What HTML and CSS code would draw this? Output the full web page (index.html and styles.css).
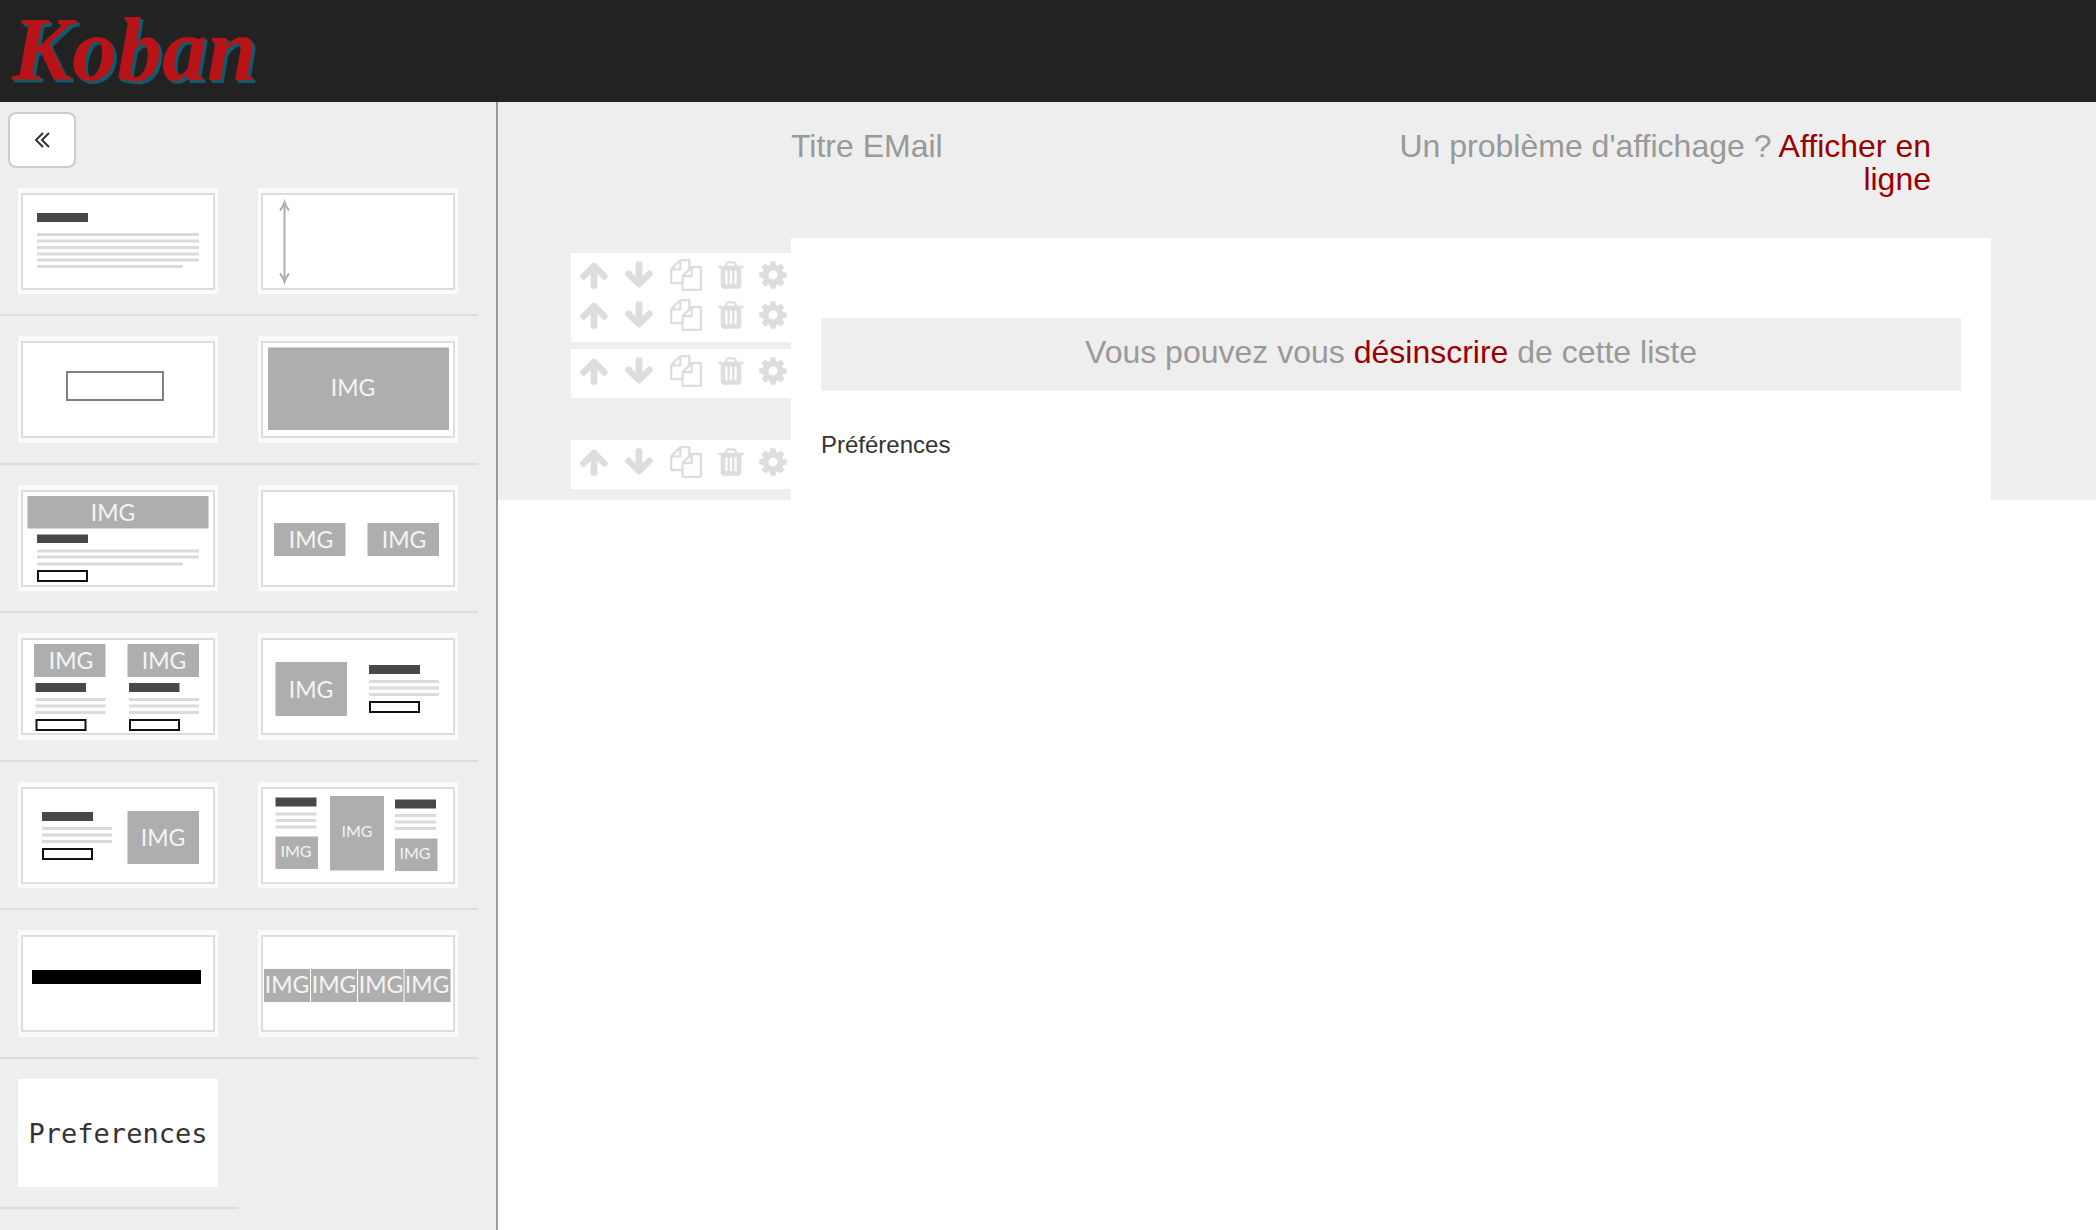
FILE: index.html
```html
<!DOCTYPE html>
<html lang="fr">
<head>
<meta charset="utf-8">
<title>Koban</title>
<meta name="viewport" content="width=device-width, initial-scale=1">
<link rel="stylesheet" href="styles.css">
</head>
<body>
<svg class="defs" width="0" height="0" aria-hidden="true">
  <symbol id="up" viewBox="0 0 1792 1792"><path d="M1675 971q0 51-37 90l-75 75q-38 38-91 38-54 0-90-38l-294-293v704q0 52-37.5 84.5t-90.5 32.5h-128q-53 0-90.5-32.5t-37.5-84.5v-704l-294 293q-36 38-90 38t-90-38l-75-75q-38-38-38-90 0-53 38-91l651-651q35-37 90-37 54 0 91 37l651 651q37 39 37 91z"/></symbol>
  <symbol id="down" viewBox="0 0 1792 1792"><path d="M1675 832q0 53-37 90l-651 652q-39 37-91 37-53 0-90-37l-651-652q-38-36-38-90 0-53 38-91l74-75q39-37 91-37 53 0 90 37l294 294v-704q0-52 38-90t90-38h128q52 0 90 38t38 90v704l294-294q37-37 90-37 52 0 91 37l75 75q37 39 37 91z"/></symbol>
  <symbol id="copy" viewBox="0 0 1792 1792"><path d="M1696 384q40 0 68 28t28 68v1216q0 40-28 68t-68 28h-960q-40 0-68-28t-28-68v-288h-544q-40 0-68-28t-28-68v-672q0-40 20-88t48-76l408-408q28-28 76-48t88-20h416q40 0 68 28t28 68v328q68-40 128-40h416zm-544 213l-299 299h299v-299zm-640-384l-299 299h299v-299zm196 647l316-316v-416h-384v416q0 40-28 68t-68 28h-416v640h512v-256q0-40 20-88t48-76zm956 804v-1152h-384v416q0 40-28 68t-68 28h-416v640h896z"/></symbol>
  <symbol id="trash" viewBox="0 0 1792 1792"><path d="M704 1376v-704q0-14-9-23t-23-9h-64q-14 0-23 9t-9 23v704q0 14 9 23t23 9h64q14 0 23-9t9-23zm256 0v-704q0-14-9-23t-23-9h-64q-14 0-23 9t-9 23v704q0 14 9 23t23 9h64q14 0 23-9t9-23zm256 0v-704q0-14-9-23t-23-9h-64q-14 0-23 9t-9 23v704q0 14 9 23t23 9h64q14 0 23-9t9-23zm-544-992h448l-48-117q-7-9-17-11h-317q-10 2-17 11zm928 32v64q0 14-9 23t-23 9h-96v948q0 83-47 143.5t-113 60.5h-832q-66 0-113-58.5t-47-141.5v-952h-96q-14 0-23-9t-9-23v-64q0-14 9-23t23-9h309l70-167q15-37 54-63t79-26h320q40 0 79 26t54 63l70 167h309q14 0 23 9t9 23z"/></symbol>
  <symbol id="cog" viewBox="0 0 1792 1792"><path d="M1152 896q0-106-75-181t-181-75-181 75-75 181 75 181 181 75 181-75 75-181zm512-109v222q0 12-8 23t-20 13l-185 28q-19 54-39 91 35 50 107 138 10 12 10 25t-9 23q-27 37-99 108t-94 71q-12 0-26-9l-138-108q-44 23-91 38-16 136-29 186-7 28-36 28h-222q-14 0-24.5-8.5t-11.5-21.5l-28-184q-49-16-90-37l-141 107q-10 9-25 9-14 0-25-11-126-114-165-168-7-10-7-23 0-12 8-23 15-21 51-66.5t54-70.5q-27-50-41-99l-183-27q-13-2-21-12.5t-8-23.5v-222q0-12 8-23t19-13l186-28q14-46 39-92-40-57-107-138-10-12-10-24 0-10 9-23 26-36 98.5-107.5t94.5-71.5q13 0 26 10l138 107q44-23 91-38 16-136 29-186 7-28 36-28h222q14 0 24.5 8.5t11.5 21.5l28 184q49 16 90 37l142-107q9-9 24-9 13 0 25 10 129 119 165 170 7 8 7 22 0 12-8 23-15 21-51 66.5t-54 70.5q26 50 41 98l183 28q13 2 21 12.5t8 23.5z"/></symbol>
</svg>

<header class="topbar"><a class="logo" href="#">Koban</a></header>

<div class="layout">
  <aside class="sidebar">
    <button class="collapse" type="button" aria-label="Réduire">
      <svg width="16" height="18" viewBox="0 0 16 18"><path d="M9 2L2 9l7 7M15 2L8 9l7 7"/></svg>
    </button>
    <ul class="blocks">
      <li class="block"><svg class="thumb" viewBox="0 0 200 106">
        <rect class="frame" x="4" y="6" width="192" height="95"/>
        <rect class="title" x="19" y="25" width="51" height="9"/>
        <path class="lines" d="M19 46.500H181M19 53H181M19 59.500H181M19 66H181M19 72H181M19 78.500H165"/>
      </svg></li>
      <li class="block"><svg class="thumb" viewBox="0 0 200 106">
        <rect class="frame" x="4" y="6" width="192" height="95"/>
        <path class="arrow" d="M26.500 14V94M22 22.500Q25 19 26.500 14Q28 19 31 22.500M22 85.500Q25 89 26.500 94Q28 89 31 85.500"/>
      </svg></li>
      <li class="block"><svg class="thumb tall" viewBox="0 0 200 107">
        <rect class="frame" x="4" y="6" width="192" height="95"/>
        <rect class="outline soft" x="49" y="36" width="96" height="28"/>
      </svg></li>
      <li class="block"><svg class="thumb tall" viewBox="0 0 200 107">
        <rect class="frame" x="4" y="6" width="192" height="95"/>
        <rect class="img" x="10" y="11.500" width="181" height="82.500"/>
        <text class="label" x="95" y="60">IMG</text>
      </svg></li>
      <li class="block"><svg class="thumb" viewBox="0 0 200 106">
        <rect class="frame" x="4" y="6" width="192" height="95"/>
        <rect class="img" x="9.500" y="11" width="181" height="32.500"/>
        <text class="label" x="95" y="36">IMG</text>
        <rect class="title" x="19" y="49.500" width="51" height="8.500"/>
        <path class="lines" d="M19 66H181M19 72H181M19 79H165"/>
        <rect class="outline" x="20" y="86" width="49" height="10"/>
      </svg></li>
      <li class="block"><svg class="thumb" viewBox="0 0 200 106">
        <rect class="frame" x="4" y="6" width="192" height="95"/>
        <rect class="img" x="16" y="38" width="71.500" height="33"/>
        <rect class="img" x="109.500" y="38" width="71.500" height="33"/>
        <text class="label" x="53" y="63">IMG</text><text class="label" x="146" y="63">IMG</text>
      </svg></li>
      <li class="block"><svg class="thumb tall" viewBox="0 0 200 107">
        <rect class="frame" x="4" y="6" width="192" height="95"/>
        <rect class="img" x="16" y="11" width="71.500" height="33"/>
        <rect class="img" x="109.500" y="11" width="71.500" height="33"/>
        <text class="label" x="53" y="36">IMG</text><text class="label" x="146" y="36">IMG</text>
        <rect class="title" x="17.500" y="50" width="50.500" height="9"/>
        <rect class="title" x="111" y="50" width="50.500" height="9"/>
        <path class="lines" d="M17.500 66.500H87.500M17.500 73H87.500M17.500 79.500H87.500M111 66.500H181M111 73H181M111 79.500H181"/>
        <rect class="outline" x="18.500" y="87" width="49" height="10"/>
        <rect class="outline" x="112" y="87" width="49" height="10"/>
      </svg></li>
      <li class="block"><svg class="thumb tall" viewBox="0 0 200 107">
        <rect class="frame" x="4" y="6" width="192" height="95"/>
        <rect class="img" x="17.500" y="29" width="71.500" height="54"/>
        <text class="label" x="53" y="65">IMG</text>
        <rect class="title" x="111" y="32" width="51" height="9"/>
        <path class="lines" d="M111 48.500H181M111 55H181M111 61.500H181"/>
        <rect class="outline" x="112" y="69" width="49" height="10"/>
      </svg></li>
      <li class="block"><svg class="thumb" viewBox="0 0 200 106">
        <rect class="frame" x="4" y="6" width="192" height="95"/>
        <rect class="title" x="24" y="30" width="51" height="9"/>
        <path class="lines" d="M24 46.500H94M24 53H94M24 59.500H94"/>
        <rect class="outline" x="25" y="67" width="49" height="10"/>
        <rect class="img" x="109.500" y="29" width="71.500" height="53"/>
        <text class="label" x="145" y="64">IMG</text>
      </svg></li>
      <li class="block"><svg class="thumb" viewBox="0 0 200 106">
        <rect class="frame" x="4" y="6" width="192" height="95"/>
        <rect class="title" x="17.500" y="15.500" width="41" height="9"/>
        <rect class="title" x="137" y="17.500" width="41" height="9"/>
        <path class="lines" d="M17.500 32H58.500M17.500 38.500H58.500M17.500 45H58.500M137 33.500H178M137 40H178M137 46.500H178"/>
        <rect class="img" x="17.500" y="54.500" width="42.500" height="32.500"/>
        <rect class="img" x="72" y="14" width="54" height="74.500"/>
        <rect class="img" x="137" y="56.500" width="42.500" height="32.500"/>
        <text class="label small" x="38" y="75">IMG</text><text class="label small" x="99" y="55">IMG</text><text class="label small" x="157" y="77">IMG</text>
      </svg></li>
      <li class="block"><svg class="thumb tall" viewBox="0 0 200 107">
        <rect class="frame" x="4" y="6" width="192" height="95"/>
        <rect class="rule" x="14" y="40" width="169" height="14"/>
      </svg></li>
      <li class="block"><svg class="thumb tall" viewBox="0 0 200 107">
        <rect class="frame" x="4" y="6" width="192" height="95"/>
        <rect class="img" x="6" y="39" width="46" height="33"/>
        <rect class="img" x="53" y="39" width="46" height="33"/>
        <rect class="img" x="100" y="39" width="45.500" height="33"/>
        <rect class="img" x="146.500" y="39" width="46" height="33"/>
        <text class="label" x="29" y="63">IMG</text><text class="label" x="76" y="63">IMG</text><text class="label" x="123" y="63">IMG</text><text class="label" x="169" y="63">IMG</text>
      </svg></li>
      <li class="block"><span class="thumb plain">Preferences</span></li>
    </ul>
  </aside>

  <main class="canvas">
    <div class="mail-head">
      <p class="mail-title">Titre EMail</p>
      <p class="mail-view">Un problème d'affichage ? <a href="#">Afficher en ligne</a></p>
    </div>
    <div class="mail-row">
      <div class="tools">
        <div class="toolbox">
          <div class="toolrow">
            <button type="button" class="tool arrow-tool" aria-label="Monter"><svg><use href="#up"/></svg></button>
            <button type="button" class="tool arrow-tool" aria-label="Descendre"><svg><use href="#down"/></svg></button>
            <button type="button" class="tool copy-tool" aria-label="Dupliquer"><svg><use href="#copy"/></svg></button>
            <button type="button" class="tool trash-tool" aria-label="Supprimer"><svg><use href="#trash"/></svg></button>
            <button type="button" class="tool cog-tool" aria-label="Paramètres"><svg><use href="#cog"/></svg></button>
          </div>
          <div class="toolrow">
            <button type="button" class="tool arrow-tool" aria-label="Monter"><svg><use href="#up"/></svg></button>
            <button type="button" class="tool arrow-tool" aria-label="Descendre"><svg><use href="#down"/></svg></button>
            <button type="button" class="tool copy-tool" aria-label="Dupliquer"><svg><use href="#copy"/></svg></button>
            <button type="button" class="tool trash-tool" aria-label="Supprimer"><svg><use href="#trash"/></svg></button>
            <button type="button" class="tool cog-tool" aria-label="Paramètres"><svg><use href="#cog"/></svg></button>
          </div>
        </div>
        <div class="toolbox">
          <div class="toolrow">
            <button type="button" class="tool arrow-tool" aria-label="Monter"><svg><use href="#up"/></svg></button>
            <button type="button" class="tool arrow-tool" aria-label="Descendre"><svg><use href="#down"/></svg></button>
            <button type="button" class="tool copy-tool" aria-label="Dupliquer"><svg><use href="#copy"/></svg></button>
            <button type="button" class="tool trash-tool" aria-label="Supprimer"><svg><use href="#trash"/></svg></button>
            <button type="button" class="tool cog-tool" aria-label="Paramètres"><svg><use href="#cog"/></svg></button>
          </div>
        </div>
        <div class="toolbox last">
          <div class="toolrow">
            <button type="button" class="tool arrow-tool" aria-label="Monter"><svg><use href="#up"/></svg></button>
            <button type="button" class="tool arrow-tool" aria-label="Descendre"><svg><use href="#down"/></svg></button>
            <button type="button" class="tool copy-tool" aria-label="Dupliquer"><svg><use href="#copy"/></svg></button>
            <button type="button" class="tool trash-tool" aria-label="Supprimer"><svg><use href="#trash"/></svg></button>
            <button type="button" class="tool cog-tool" aria-label="Paramètres"><svg><use href="#cog"/></svg></button>
          </div>
        </div>
      </div>
      <section class="mail-body">
        <p class="unsubscribe">Vous pouvez vous <a href="#">désinscrire</a> de cette liste</p>
        <p class="preferences">Préférences</p>
      </section>
    </div>
  </main>
</div>
</body>
</html>
```
FILE: styles.css
```css
* { box-sizing: border-box; }

body {
  margin: 0;
  min-height: 100vh;
  display: flex;
  flex-direction: column;
  background: #fff;
  color: #333;
  font-family: "Liberation Sans", Arial, Helvetica, sans-serif;
}

p, ul { margin: 0; padding: 0; }
button { margin: 0; padding: 0; border: 0; background: none; cursor: pointer; }
.defs { position: absolute; }

.topbar {
  height: 102px;
  padding-left: 12px;
  background: #222;
}

.logo {
  font: italic bold 90px/100px "Liberation Serif", "Times New Roman", serif;
  color: #b81418;
  text-decoration: none;
  text-shadow: 2px 2px 0 #145a6c, 3px 3px 0 #145a6c;
}

.layout { flex: 1; display: flex; align-items: stretch; }

/* Block palette */
.sidebar {
  flex: none;
  width: 498px;
  padding-top: 10px;
  background: #eee;
  border-right: 2px solid #999;
}

.collapse {
  display: flex;
  align-items: center;
  justify-content: center;
  width: 68px;
  height: 56px;
  margin-left: 8px;
  background: #fff;
  border: 2px solid #ccc;
  border-radius: 8px;
}
.collapse path { fill: none; stroke: #333; stroke-width: 2; }

.blocks {
  display: grid;
  grid-template-columns: 238px 240px;
  list-style: none;
}
.block { padding: 20px; border-bottom: 2px solid #ddd; }
.block:nth-child(odd) { padding-left: 18px; }

.thumb { display: block; width: 200px; height: 106px; background: #fafafa; }
.thumb.tall { height: 107px; }
.thumb.plain {
  height: 108px;
  background: #fff;
  text-align: center;
  font: 27px/110px "DejaVu Sans Mono", monospace;
}

.frame { fill: #fff; stroke: #ddd; stroke-width: 2; }
.title { fill: #484848; }
.rule { fill: #000; }
.img { fill: #aeaeae; }
.lines { stroke: #dadada; stroke-width: 3; }
.arrow { fill: none; stroke: #b0b0b0; stroke-width: 2; }
.outline { fill: #fff; stroke: #111; stroke-width: 2; }
.outline.soft { stroke: #808080; }
.label { fill: #f4f4f4; font-family: Lato, sans-serif; font-size: 23px; text-anchor: middle; }
.label.small { font-size: 16px; }

/* Email editor */
.canvas { flex: 1; align-self: flex-start; background: #eee; }

.mail-head {
  display: grid;
  grid-template-columns: 1fr 1fr;
  padding: 28px 105px 42px 293px;
  font-size: 32px;
  line-height: 33px;
  color: #999;
}
.mail-view { padding-right: 60px; text-align: right; }
.canvas a { color: #900; text-decoration: none; }

.mail-row {
  display: grid;
  grid-template-columns: 293px 1fr;
  padding-right: 105px;
}

.tools {
  display: flex;
  flex-direction: column;
  align-items: flex-end;
  gap: 7px;
  padding: 15px 0 11px;
}
.toolbox { width: 220px; padding: 2px 0 7px 8px; background: #fff; }
.toolbox.last { margin-top: 35px; }
.toolrow { display: flex; align-items: center; gap: 15px; height: 40px; }
.tool { display: flex; align-items: center; justify-content: center; }
.tool svg { flex: none; width: 32px; height: 32px; fill: #ddd; }
.arrow-tool { width: 30px; }
.copy-tool { width: 34px; }
.trash-tool { width: 26px; }
.cog-tool { width: 28px; }

.mail-body { padding: 80px 30px 40px; background: #fff; }
.unsubscribe {
  padding: 18px 20px 22px;
  background: #eee;
  color: #999;
  font-size: 32px;
  line-height: 33px;
  text-align: center;
}
.preferences { margin-top: 40px; font-size: 24px; line-height: 28px; }
```
